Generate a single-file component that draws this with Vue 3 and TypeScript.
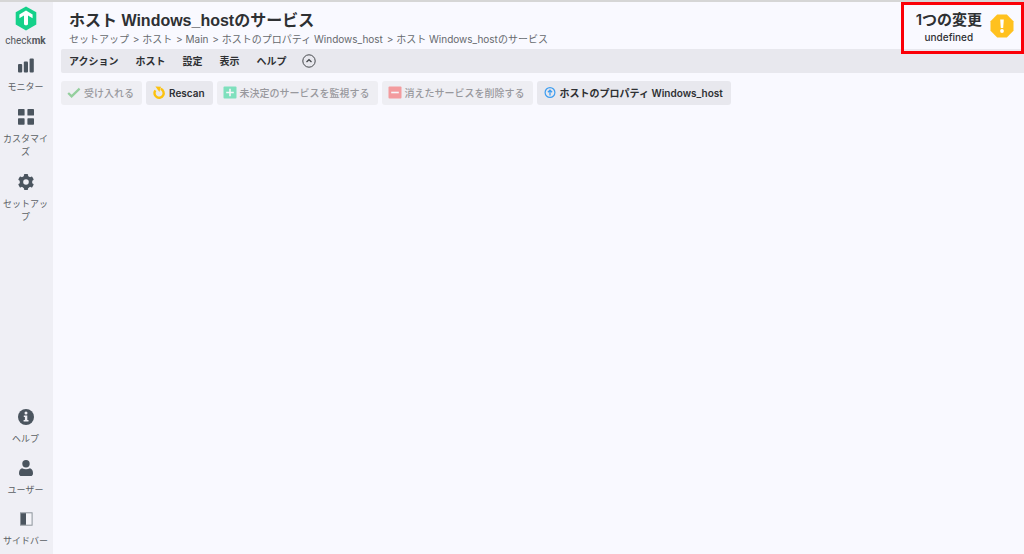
<script setup lang="ts">
type NavItem = { id: string; label: string }
type ActionItem = { icon: string; label: string; disabled: boolean }

const mainNav: NavItem[] = [
  { id: 'monitor', label: 'モニター' },
  { id: 'customize', label: 'カスタマイズ' },
  { id: 'setup', label: 'セットアップ' },
]
const footNav: NavItem[] = [
  { id: 'help', label: 'ヘルプ' },
  { id: 'user', label: 'ユーザー' },
  { id: 'sidebar', label: 'サイドバー' },
]
const navGroups = [mainNav, footNav]
const crumbs = ['セットアップ', 'ホスト', 'Main', 'ホストのプロパティ Windows_host', 'ホスト Windows_hostのサービス']
const menus = ['アクション', 'ホスト', '設定', '表示', 'ヘルプ']
const actions: ActionItem[] = [
  { icon: 'check', label: '受け入れる', disabled: true },
  { icon: 'rescan', label: 'Rescan', disabled: false },
  { icon: 'plus', label: '未決定のサービスを監視する', disabled: true },
  { icon: 'minus', label: '消えたサービスを削除する', disabled: true },
  { icon: 'up', label: 'ホストのプロパティ Windows_host', disabled: false },
]
</script>

<template>
  <div class="app">
    <aside class="side">
      <a class="logo" href="#">
        <svg width="22" height="25" viewBox="0 0 22 25" aria-hidden="true">
          <path d="M11 0.5 21.3 6.3V18.5L11 24.5 0.7 18.5V6.3Z" fill="#15d18a" />
          <path d="M11 4.6 17.6 8.4V12.2L13 9.6V18.4L11 19.6 9 18.4V9.6L4.4 12.2V8.4Z" fill="#fff" />
        </svg>
        <span class="brand">check<b>mk</b></span>
      </a>
      <nav v-for="(group, g) in navGroups" :key="g" class="nav">
        <button v-for="item in group" :key="item.id" class="nav-item" type="button">
          <svg width="16" height="16" viewBox="0 0 16 16" fill="#4b555f" aria-hidden="true">
            <template v-if="item.id === 'monitor'">
              <rect x="0" y="7" width="4.2" height="8.5" rx="1" />
              <rect x="5.8" y="4.5" width="4.2" height="11" rx="1" />
              <rect x="11.6" y="1.5" width="4.2" height="14" rx="1" />
            </template>
            <template v-else-if="item.id === 'customize'">
              <rect x="0" y="0" width="6.6" height="6.6" rx="0.7" />
              <rect x="9.4" y="0" width="6.6" height="6.6" rx="0.7" />
              <rect x="0" y="9.2" width="6.6" height="6.6" rx="0.7" />
              <rect x="9.4" y="9.2" width="6.6" height="6.6" rx="0.7" />
            </template>
            <g v-else-if="item.id === 'setup'">
              <rect v-for="a in [0, 60, 120]" :key="a" x="5.9" y="0" width="4.2" height="16" rx="1" :transform="`rotate(${a} 8 8)`" />
              <circle cx="8" cy="8" r="4.6" fill="none" stroke="#4b555f" stroke-width="3.4" />
              <circle cx="8" cy="8" r="2.8" fill="#efeff5" />
            </g>
            <template v-else-if="item.id === 'help'">
              <circle cx="8" cy="8" r="8" />
              <circle cx="8" cy="4" r="1.5" fill="#efeff5" />
              <path d="M5.8 6.4H9.3V11H10.5V12.6H5.6V11H6.9V8H5.8Z" fill="#efeff5" />
            </template>
            <template v-else-if="item.id === 'user'">
              <circle cx="8" cy="3.8" r="3.7" />
              <path d="M4 8.2Q8 10.4 12 8.2Q15 9.4 15 13.2Q15 16 12.5 16H3.5Q1 16 1 13.2Q1 9.4 4 8.2Z" />
            </template>
            <template v-else>
              <rect x="2.5" y="1.8" width="11.6" height="12.4" fill="#f4f4f8" stroke="#8d949b" stroke-width="1" />
              <rect x="3" y="2.2" width="5" height="11.6" />
            </template>
          </svg>
          <span>{{ item.label }}</span>
        </button>
      </nav>
    </aside>

    <main class="main">
      <header class="head">
        <div>
          <h1 class="title">ホスト Windows_hostのサービス</h1>
          <nav class="crumbs">
            <template v-for="(c, i) in crumbs" :key="c">
              <span v-if="i" class="sep"> &gt; </span><a href="#">{{ c }}</a>
            </template>
          </nav>
        </div>
        <a class="changes" href="#">
          <span class="changes-text"><strong>1つの変更</strong><span>undefined</span></span>
          <svg width="24" height="24" viewBox="0 0 24 24" aria-hidden="true">
            <path d="M7.2 0.5H16.8L23.5 7.2V16.8L16.8 23.5H7.2L0.5 16.8V7.2Z" fill="#ffc11f" />
            <path d="M10.2 5.5H13.8L13.2 14H10.8Z" fill="#fff" />
            <circle cx="12" cy="17" r="1.9" fill="#fff" />
          </svg>
        </a>
      </header>

      <div class="menubar">
        <button v-for="m in menus" :key="m" type="button" class="menu">{{ m }}</button>
        <button type="button" class="fold" aria-label="折りたたむ">
          <svg width="14" height="14" viewBox="0 0 14 14" fill="none" stroke="#45484c" aria-hidden="true">
            <circle cx="7" cy="7" r="6.2" stroke-width="1" />
            <path d="M4.5 8 7 5.7 9.5 8" stroke-width="1.3" />
          </svg>
        </button>
      </div>

      <div class="actions">
        <button v-for="a in actions" :key="a.label" type="button" class="action" :disabled="a.disabled">
          <svg width="14" height="14" viewBox="0 0 14 14" fill="none" aria-hidden="true">
            <path v-if="a.icon === 'check'" d="M1.2 7 4.6 10.4 12.6 2.6" stroke="#3cb14a" stroke-width="2.2" />
            <template v-else-if="a.icon === 'rescan'">
              <path d="M8.8 2.9A4.6 4.6 0 1 1 3.4 4.4" stroke="#fcc20f" stroke-width="2.4" />
              <path d="M3.4 0.6 9 0.8 7.4 6Z" fill="#fcc20f" />
            </template>
            <template v-else-if="a.icon === 'plus'">
              <rect x="0.5" y="0.5" width="13" height="12" rx="1" fill="#13d389" />
              <path d="M7 2.7V10.3M3.2 6.5H10.8" stroke="#fff" stroke-width="1.6" />
            </template>
            <template v-else-if="a.icon === 'minus'">
              <rect x="0.5" y="0.5" width="13" height="12" rx="1" fill="#f94b4b" />
              <path d="M3.2 6.5H10.8" stroke="#fff" stroke-width="1.6" />
            </template>
            <template v-else>
              <circle cx="7" cy="6.5" r="4.9" stroke="#3d9df0" stroke-width="1.2" />
              <path d="M7 9.5V4.5M4.9 6.3 7 4.1 9.1 6.3" stroke="#3d9df0" stroke-width="1.3" />
            </template>
          </svg>
          <span>{{ a.label }}</span>
        </button>
      </div>
    </main>
  </div>
</template>

<style>
body {
  margin: 0;
  background: #f9f9ff;
}
</style>

<style scoped>
.app {
  display: flex;
  box-sizing: border-box;
  min-height: 100vh;
  border-top: 2px solid #d6d6d6;
  font-family: Inter, "Noto Sans CJK JP", sans-serif;
  font-size: 10px;
  color: #2e3033;
}
button {
  margin: 0;
  padding: 0;
  border: 0;
  background: none;
  font: inherit;
  color: inherit;
}
a {
  color: inherit;
  text-decoration: none;
}
svg {
  display: block;
  flex: none;
}
.side {
  display: flex;
  flex-direction: column;
  flex: none;
  box-sizing: border-box;
  width: 53px;
  padding: 4px 2px 7px 0;
  background: #efeff5;
}
.logo {
  display: flex;
  flex-direction: column;
  align-items: center;
  gap: 4px;
  margin-bottom: 10px;
}
.brand {
  font-family: Roboto, sans-serif;
  font-size: 10px;
  line-height: 12px;
  color: #54585d;
}
.brand b {
  font-weight: 700;
}
.nav {
  display: flex;
  flex-direction: column;
  gap: 16px;
}
.nav:last-child {
  gap: 15px;
  margin-top: auto;
}
.nav-item {
  display: flex;
  flex-direction: column;
  align-items: center;
  gap: 7px;
  padding: 0 2px;
  font-size: 9px;
  line-height: 13px;
  color: #5b5f64;
  word-break: break-all;
}
.main {
  flex: 1;
  min-width: 0;
  padding-left: 8px;
}
.head {
  display: flex;
  justify-content: space-between;
  height: 47px;
}
.title {
  margin: 0;
  padding: 9px 0 0 8px;
  font-family: "Liberation Sans", "Noto Sans CJK JP", sans-serif;
  font-size: 16px;
  line-height: 20px;
  font-weight: 600;
}
.crumbs {
  padding-left: 8px;
  line-height: 16px;
  color: #66696e;
  white-space: pre-wrap;
}
.sep {
  padding-left: 1px;
}
.changes {
  display: flex;
  align-items: center;
  gap: 8px;
  box-sizing: border-box;
  height: 52px;
  padding: 0 7px 4px 12px;
  border: 3px solid #fb0007;
  position: relative;
}
.changes-text {
  display: flex;
  flex-direction: column;
  align-items: center;
  padding-top: 2px;
  font-weight: 500;
  line-height: 14px;
}
.changes-text strong {
  font-size: 15px;
  line-height: 20px;
  font-weight: 600;
}
.menubar {
  display: flex;
  align-items: center;
  gap: 17px;
  height: 24px;
  padding-left: 8px;
  background: #e8e8ee;
  border-radius: 2px 0 0 2px;
}
.menu {
  padding-bottom: 2px;
  font-weight: 600;
}
.fold {
  margin-left: -2px;
}
.actions {
  display: flex;
  flex-wrap: wrap;
  gap: 4px;
  padding-top: 8px;
}
.action {
  display: flex;
  align-items: center;
  gap: 3px;
  box-sizing: border-box;
  height: 24px;
  padding: 0 8px 1px 6px;
  border-radius: 3px;
  background: #e8e8ee;
  font-weight: 600;
}
.action:disabled {
  background: #eeeef3;
  color: #98989d;
  font-weight: 500;
}
.action:disabled svg {
  opacity: 0.5;
}
</style>
